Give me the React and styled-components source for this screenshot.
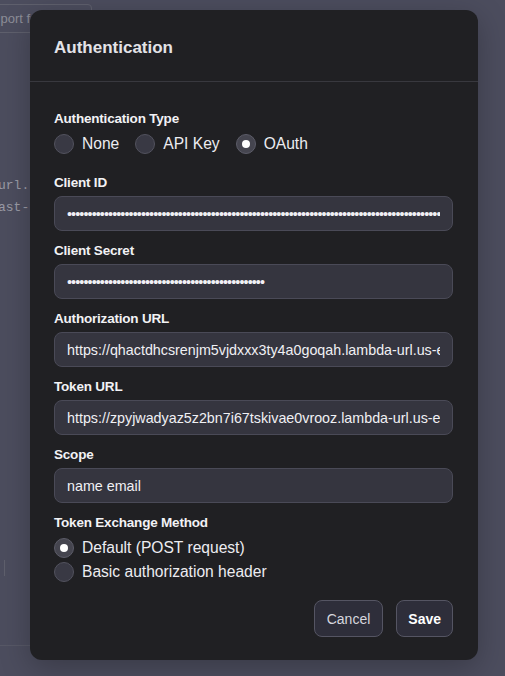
import React, { useState } from 'react';
import styled, { createGlobalStyle } from 'styled-components';

const GlobalStyle = createGlobalStyle`
  html, body {
    margin: 0;
    padding: 0;
    background: #4c4d5e;
  }
  body {
    font-family: "Liberation Sans", Arial, sans-serif;
    -webkit-font-smoothing: antialiased;
  }
`;

const Page = styled.div`
  position: relative;
  width: 505px;
  height: 676px;
  overflow: hidden;
  background: #4c4d5e;
`;

// faint page content sitting behind the overlay
const GhostButton = styled.div`
  position: absolute;
  top: 4px;
  left: -34px;
  width: 126px;
  height: 29px;
  border: 1px solid #5f606d;
  border-radius: 4px;
  box-sizing: border-box;
  color: #8c8d98;
  font-size: 13px;
  line-height: 27px;
  padding-left: 19px;
`;

const GhostCode = styled.div`
  position: absolute;
  top: 175px;
  left: -2px;
  font-family: "Liberation Mono", monospace;
  font-size: 13px;
  line-height: 22px;
  color: #9a9ba6;
  white-space: pre;
`;

const GhostLine = styled.div`
  position: absolute;
  left: 4px;
  top: 560px;
  width: 1px;
  height: 16px;
  background: #5e5f6c;
`;

const GhostRule = styled.div`
  position: absolute;
  left: 0;
  top: 645px;
  width: 40px;
  height: 1px;
  background: #575866;
`;

const Modal = styled.div`
  position: absolute;
  top: 10px;
  left: 30px;
  width: 448px;
  height: 650px;
  background: #202023;
  border-radius: 12px;
  box-shadow: 0 8px 30px rgba(0, 0, 0, 0.25);
  display: flex;
  flex-direction: column;
  color: #ececf1;
`;

const Header = styled.div`
  height: 72px;
  box-sizing: border-box;
  padding: 28px 24px 0;
  border-bottom: 1px solid #38383e;
`;

const Title = styled.h2`
  margin: 0;
  font-size: 17px;
  line-height: 20px;
  font-weight: 700;
  color: #e3e3e8;
`;

const Body = styled.div`
  padding: 29px 25px 0 24px;
  display: flex;
  flex-direction: column;
`;

const Field = styled.div`
  display: flex;
  flex-direction: column;
  margin-bottom: ${p => p.$mb ?? 12}px;
`;

const Label = styled.label`
  font-size: 13.5px;
  line-height: 16px;
  font-weight: 700;
  color: #f2f2f5;
  margin-bottom: ${p => p.$mb ?? 5}px;
  letter-spacing: -0.2px;
`;

const Input = styled.input`
  height: 35px;
  box-sizing: border-box;
  width: 100%;
  background: #35353f;
  border: 1px solid #4a4a57;
  border-radius: 8px;
  padding: 0 12px;
  color: #f0f0f4;
  font-family: "Liberation Sans", Arial, sans-serif;
  font-size: 14.3px;
  outline: none;
  letter-spacing: ${p => (p.type === 'password' ? '-0.9px' : '0')};
`;

const RadioRow = styled.div`
  display: flex;
  flex-direction: ${p => (p.$column ? 'column' : 'row')};
  gap: ${p => (p.$column ? 4 : 0)}px;
`;

const RadioOption = styled.label`
  display: flex;
  align-items: center;
  height: 20px;
  margin-right: ${p => (p.$inline ? 16 : 0)}px;
  font-size: 15.6px;
  color: #ececf1;
  cursor: pointer;
`;

const RadioDot = styled.span`
  width: 20px;
  height: 20px;
  box-sizing: border-box;
  border-radius: 50%;
  border: 1px solid ${p => (p.$checked ? '#5c5c68' : '#52525e')};
  background: ${p => (p.$checked ? '#45454f' : '#393944')};
  display: flex;
  align-items: center;
  justify-content: center;
  margin-right: 8px;
  flex-shrink: 0;

  &::after {
    content: '';
    display: ${p => (p.$checked ? 'block' : 'none')};
    width: 8px;
    height: 8px;
    border-radius: 50%;
    background: #ffffff;
  }
`;

const Footer = styled.div`
  display: flex;
  justify-content: flex-end;
  gap: 13px;
  padding: 0 25px 0 24px;
  margin-top: 18px;
`;

const Button = styled.button`
  height: 37px;
  box-sizing: border-box;
  padding: 0 ${p => (p.$primary ? 11 : 12)}px;
  background: #2e2e3a;
  border: 1px solid #555563;
  border-radius: 8px;
  color: ${p => (p.$primary ? '#ffffff' : '#d6d6de')};
  font-family: "Liberation Sans", Arial, sans-serif;
  font-size: 14px;
  font-weight: ${p => (p.$primary ? 700 : 400)};
  cursor: pointer;
`;

const authTypes = ['None', 'API Key', 'OAuth'];
const exchangeMethods = ['Default (POST request)', 'Basic authorization header'];

const fields = [
  { label: 'Client ID', type: 'password', value: 'x'.repeat(130) },
  { label: 'Client Secret', type: 'password', value: 'x'.repeat(48) },
  { label: 'Authorization URL', type: 'text', value: 'https://qhactdhcsrenjm5vjdxxx3ty4a0goqah.lambda-url.us-east-1.on.aws/authorize' },
  { label: 'Token URL', type: 'text', value: 'https://zpyjwadyaz5z2bn7i67tskivae0vrooz.lambda-url.us-east-1.on.aws/token' },
  { label: 'Scope', type: 'text', value: 'name email' },
];

export default function App() {
  const [authType, setAuthType] = useState('OAuth');
  const [method, setMethod] = useState(exchangeMethods[0]);

  return (
    <Page>
      <GlobalStyle />
      <GhostButton>Import f</GhostButton>
      <GhostCode>{'url.\nast-'}</GhostCode>
      <GhostLine />
      <GhostRule />

      <Modal>
        <Header>
          <Title>Authentication</Title>
        </Header>
        <Body>
          <Field $mb={21}>
            <Label $mb={7}>Authentication Type</Label>
            <RadioRow>
              {authTypes.map(t => (
                <RadioOption key={t} $inline onClick={() => setAuthType(t)}>
                  <RadioDot $checked={authType === t} />
                  {t}
                </RadioOption>
              ))}
            </RadioRow>
          </Field>

          {fields.map(f => (
            <Field key={f.label}>
              <Label>{f.label}</Label>
              <Input type={f.type} defaultValue={f.value} />
            </Field>
          ))}

          <Field $mb={0}>
            <Label $mb={7}>Token Exchange Method</Label>
            <RadioRow $column>
              {exchangeMethods.map(m => (
                <RadioOption key={m} onClick={() => setMethod(m)}>
                  <RadioDot $checked={method === m} />
                  {m}
                </RadioOption>
              ))}
            </RadioRow>
          </Field>
        </Body>
        <Footer>
          <Button>Cancel</Button>
          <Button $primary>Save</Button>
        </Footer>
      </Modal>
    </Page>
  );
}
